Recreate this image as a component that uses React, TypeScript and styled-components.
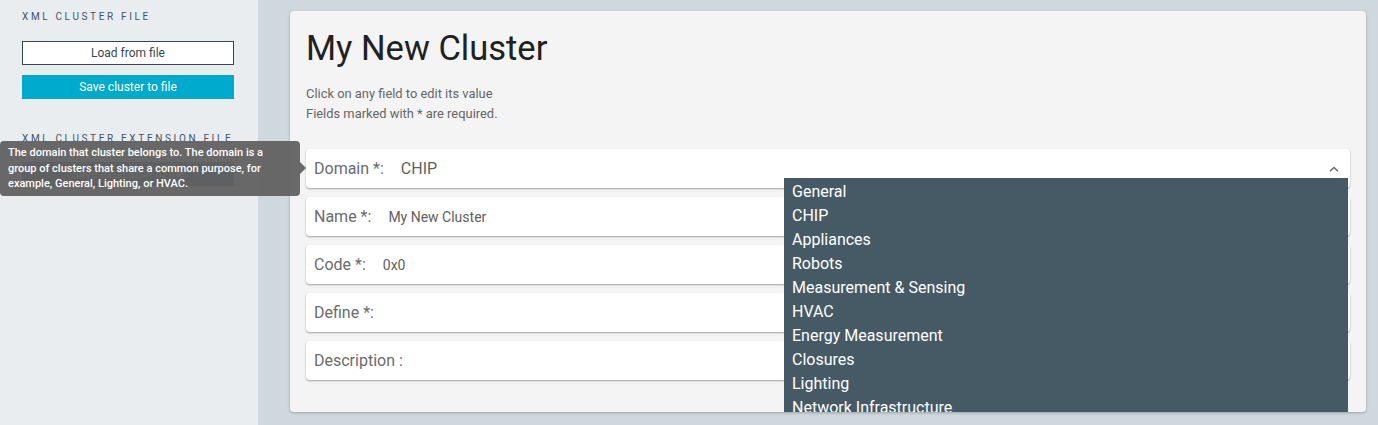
import React from "react";
import styled, { createGlobalStyle } from "styled-components";

const Global = createGlobalStyle`
  html, body { margin: 0; padding: 0; }
  body {
    font-family: Roboto, "Noto Sans", "Liberation Sans", sans-serif;
    background: #cfd8dc;
  }
  * { box-sizing: border-box; }
`;

const Page = styled.div`
  position: relative;
  display: flex;
  width: 1378px;
  height: 425px;
  overflow: hidden;
  background: #cfd8dc;
`;

const Sidebar = styled.aside`
  width: 258px;
  flex-shrink: 0;
  background: #e9edf0;
  padding: 10px 24px 0 22px;
  display: flex;
  flex-direction: column;
`;

const SectionTitle = styled.div<{ $top?: number }>`
  font-size: 10px;
  line-height: 14px;
  letter-spacing: 2.65px;
  color: #3e5565;
  text-transform: uppercase;
  margin-top: ${(p) => p.$top ?? 0}px;
  white-space: nowrap;
`;

const SideButton = styled.button<{ $variant: "outline" | "primary" | "dark"; $top: number }>`
  width: 212px;
  height: 24px;
  margin-top: ${(p) => p.$top}px;
  font-family: Roboto, "Liberation Sans", sans-serif;
  font-size: 12px;
  border-radius: 0;
  padding: 0;
  cursor: pointer;
  border: ${(p) => (p.$variant === "outline" ? "1px solid #37474f" : "none")};
  background: ${(p) =>
    p.$variant === "outline" ? "#ffffff" : p.$variant === "primary" ? "#00aacc" : "#455a64"};
  color: ${(p) => (p.$variant === "outline" ? "#37474f" : "#ffffff")};
`;

const Main = styled.main`
  flex: 1;
  padding: 11px 12px 13px 32px;
  display: flex;
`;

const Card = styled.section`
  flex: 1;
  background: #f4f4f4;
  border-radius: 4px;
  box-shadow: 0 1px 3px rgba(0, 0, 0, 0.25);
  padding: 17px 16px 0 16px;
  overflow: hidden;
  position: relative;
`;

const Title = styled.h1`
  margin: 0;
  font-size: 34.5px;
  font-weight: 400;
  line-height: 40px;
  color: #212121;
`;

const Hint = styled.div`
  margin-top: 16px;
  font-size: 12.9px;
  line-height: 20px;
  color: #666666;
`;

const Fields = styled.div`
  margin-top: 25px;
  display: flex;
  flex-direction: column;
  gap: 9px;
`;

const FieldRow = styled.div`
  position: relative;
  height: 39px;
  background: #ffffff;
  border-radius: 4px;
  box-shadow: 0 1px 2px rgba(0, 0, 0, 0.35);
  display: flex;
  align-items: center;
  padding: 0 8px;
  gap: 17px;
`;

const Label = styled.span`
  font-size: 16px;
  color: #6b6b6b;
  white-space: nowrap;
`;

const Value = styled.span<{ $large?: boolean }>`
  font-size: ${(p) => (p.$large ? 16 : 14)}px;
  color: #5f5f5f;
  flex: 1;
`;

const Caret = styled.svg`
  width: 10px;
  height: 6px;
  margin-right: 3px;
`;

const Menu = styled.ul`
  position: absolute;
  left: 478px;
  top: 29px;
  width: 564px;
  margin: 0;
  padding: 2px 0 0 0;
  list-style: none;
  background: #465a66;
  z-index: 5;
`;

const MenuItem = styled.li`
  font-size: 16px;
  line-height: 24px;
  color: #ffffff;
  padding-left: 8px;
`;

const Tooltip = styled.div`
  position: absolute;
  left: 0;
  top: 141px;
  width: 300px;
  height: 55px;
  background: rgba(97, 97, 97, 0.95);
  border-radius: 4px;
  padding: 4px 8px;
  color: #ffffff;
  font-size: 11px;
  font-weight: 500;
  line-height: 15.5px;
  z-index: 10;
  &::after {
    content: "";
    position: absolute;
    right: -6px;
    top: 21px;
    border-style: solid;
    border-width: 6px 0 6px 6px;
    border-color: transparent transparent transparent rgba(97, 97, 97, 0.95);
  }
`;

const domains = [
  "General",
  "CHIP",
  "Appliances",
  "Robots",
  "Measurement & Sensing",
  "HVAC",
  "Energy Measurement",
  "Closures",
  "Lighting",
  "Network Infrastructure",
];

export default function App() {
  return (
    <>
      <Global />
      <Page>
        <Sidebar>
          <SectionTitle>XML Cluster File</SectionTitle>
          <SideButton $variant="outline" $top={17}>Load from file</SideButton>
          <SideButton $variant="primary" $top={10}>Save cluster to file</SideButton>
          <SectionTitle $top={33}>XML Cluster Extension File</SectionTitle>
          <SideButton $variant="dark" $top={16}>Save extension to file</SideButton>
        </Sidebar>
        <Main>
          <Card>
            <Title>My New Cluster</Title>
            <Hint>
              Click on any field to edit its value
              <br />
              Fields marked with * are required.
            </Hint>
            <Fields>
              <FieldRow>
                <Label>Domain *:</Label>
                <Value $large>CHIP</Value>
                <Caret viewBox="0 0 10 6">
                  <path d="M1 5.2 L5 1.5 L9 5.2" fill="none" stroke="#666" strokeWidth="1.4" />
                </Caret>
                <Menu>
                  {domains.map((d) => (
                    <MenuItem key={d}>{d}</MenuItem>
                  ))}
                </Menu>
              </FieldRow>
              <FieldRow>
                <Label>Name *:</Label>
                <Value>My New Cluster</Value>
              </FieldRow>
              <FieldRow>
                <Label>Code *:</Label>
                <Value>0x0</Value>
              </FieldRow>
              <FieldRow>
                <Label>Define *:</Label>
              </FieldRow>
              <FieldRow>
                <Label>Description :</Label>
              </FieldRow>
            </Fields>
          </Card>
        </Main>
        <Tooltip>
          The domain that cluster belongs to. The domain is a group of clusters that share a
          common purpose, for example, General, Lighting, or HVAC.
        </Tooltip>
      </Page>
    </>
  );
}
